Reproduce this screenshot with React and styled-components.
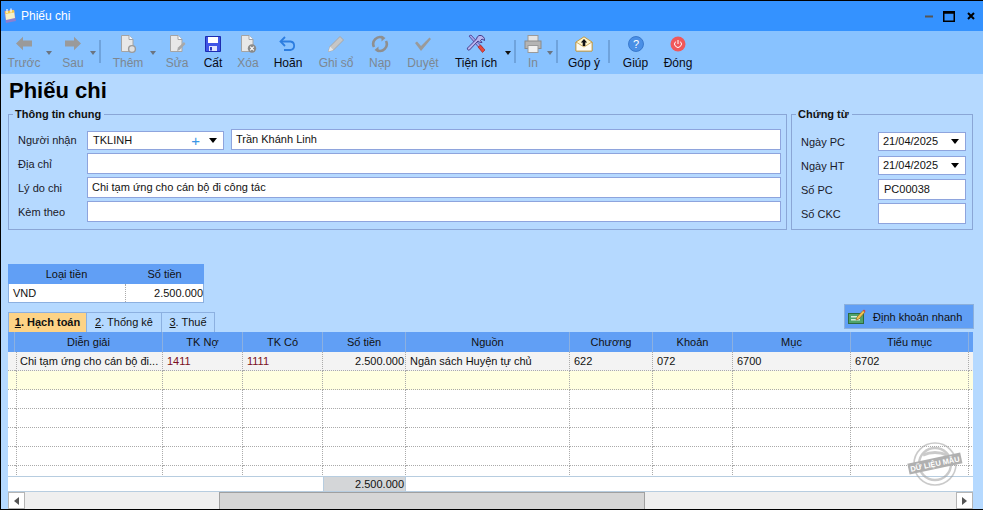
import React from "react";
import styled, { createGlobalStyle } from "styled-components";

const Global = createGlobalStyle`
  html, body { margin: 0; padding: 0; background: #000; }
  body { font-family: "Liberation Sans", Arial, sans-serif; font-size: 11px; color: #111; }
  * { box-sizing: border-box; }
`;

const Win = styled.div`
  width: 983px; height: 510px; border: 1px solid #000; border-right: 0; display: flex; flex-direction: column;
  background: #b5d9ff; overflow: hidden; position: relative;
`;
const TitleBar = styled.div`
  height: 30px; flex: none; background: #3492ff; display: flex; align-items: center; padding: 0 2px 0 1px; color: #fff; font-size: 12px;
`;
const TitleText = styled.span` margin-left: 3px; flex: 1; `;
const WinButtons = styled.div` display: flex; align-items: center; `;
const WinBtn = styled.span` display: flex; width: ${p => p.$w}px; justify-content: center; align-items: center; `;

const Toolbar = styled.div`
  height: 43px; flex: none; background: #88c2ff; display: flex; padding-left: 2px;
`;
const Tool = styled.div`
  width: ${p => p.$w}px; flex: none; margin-left: ${p => p.$ml || 0}px; display: flex; flex-direction: column; align-items: center; padding-top: 2px;
  color: ${p => p.$off ? "#7d8791" : "#0a0a14"}; font-size: 12px; white-space: nowrap;
`;
const IconBox = styled.div` height: 21px; display: flex; align-items: center; justify-content: center; `;
const ToolLabel = styled.div` margin-top: 2px; line-height: 14px; `;
const Caret = styled.div`
  flex: none; width: 0; height: 0; border: 3.5px solid transparent; border-top: 4px solid ${p => p.$off ? "#6b7480" : "#111"}; border-bottom: 0;
  margin: 20px 0 0 ${p => p.$ml ?? 0}px;
`;
const Sep = styled.div`
  flex: none; width: 2px; height: 23px; background: #6fa3dc; margin: 9px 0 0 ${p => p.$ml}px;
`;

const Content = styled.div` flex: 1; padding: 0 9px 0 7px; display: flex; flex-direction: column; min-height: 0; `;
const Heading = styled.h1` margin: 3px 0 0 1px; font-size: 22px; line-height: 27px; height: 27px; font-weight: bold; color: #000; `;
const TopRow = styled.div` display: flex; gap: 4px; margin-top: 3px; `;
const Group = styled.fieldset`
  margin: 0; padding: 7px 6px 0 9px; border: 1px solid #8aa6d6; width: ${p => p.$w}px; height: 123px; min-width: 0; flex: none;
`;
const Legend = styled.legend`
  font-weight: bold; font-size: 11px; line-height: 15px; padding: 0 3px 0 2px; margin-left: -5px; color: #111;
`;
const Fields = styled.div`
  display: grid; grid-template-columns: 69px 137px 7px 550px; grid-auto-rows: 21px; row-gap: 3px; align-items: center;
`;
const Label = styled.label` font-size: 11px; color: #1a1a2a; padding-top: ${p => p.$tight ? 0 : 1}px; `;
const Box = styled.div`
  height: ${p => p.$h || 21}px; background: #fff; border: 1px solid #8ea4dd; display: flex; align-items: center; padding-left: ${p => p.$pl ?? 4}px; padding-bottom: 1px;
  font-size: 11px; color: #111; grid-column: ${p => p.$span || "auto"}; align-self: ${p => p.$end ? "end" : "center"}; white-space: nowrap; position: relative;
`;
const Plus = styled.span` margin-left: auto; color: #3a96e6; font-size: 15px; line-height: 15px; `;
const DropArrow = styled.span`
  width: 0; height: 0; border: 4px solid transparent; border-top: 5px solid #000; border-bottom: 0; margin: 0 6px 0 ${p => p.$ml || 0}px;
`;
const SideFields = styled.div`
  display: grid; grid-template-columns: 77px 88px; grid-auto-rows: 21px; row-gap: 3px; align-items: center; padding-top: 2px;
`;
const Money = styled.div`
  width: 196px; margin: 34px 0 0 0; border: 1px solid #8cb0e0; border-top: 0; flex: none;
`;
const MoneyHead = styled.div` display: grid; grid-template-columns: 117px 1fr; height: 20px; background: #619ff5; align-items: center; text-align: center; margin: 0 -1px; `;
const MoneyRow = styled.div` display: grid; grid-template-columns: 117px 1fr; height: 18px; background: #fff; align-items: center; `;
const MoneyCell = styled.div` padding: 0 ${p => p.$right ? 0 : 4}px; text-align: ${p => p.$right ? "right" : "left"}; height: 100%; line-height: 18px; border-right: ${p => p.$line ? "1px dotted #aaa" : 0}; `;
const TabRow = styled.div` display: flex; justify-content: space-between; align-items: flex-end; height: 28px; margin-top: 1px; flex: none; `;
const Tabs = styled.div` display: flex; `;
const Tab = styled.div`
  height: 20px; width: ${p => p.$w}px; line-height: 19px; text-align: center; border: 1px solid #8cb0e0; border-bottom: 0; border-left-width: ${p => p.$first ? 1 : 0}px;
  background: ${p => p.$on ? "#fdd386" : "#b5d9ff"}; font-weight: ${p => p.$on ? "bold" : "normal"};
  u { text-decoration: underline; }
`;
const QuickBtn = styled.div`
  width: 130px; height: 25px; margin-bottom: 3px; background: #619ff5; border: 1px solid #8cb0dc; display: flex; align-items: center; padding-left: 3px; gap: 7px;
`;
const GridWrap = styled.div`
  flex: none; width: 965px; height: 160px; background: #fff; display: flex; flex-direction: column; overflow: hidden;
`;
const cols = "7px 148px 80px 80px 83px 164px 83px 80px 118px 118px 4px";
const GHead = styled.div`
  display: grid; grid-template-columns: ${cols}; height: 20px; background: #619ff5; flex: none;
`;
const GHeadCell = styled.div` text-align: center; line-height: 20px; border-right: 1px solid #8cb0e0; &:last-child { border-right: 0; } `;
const GRow = styled.div`
  display: grid; grid-template-columns: ${cols}; height: 19px; flex: none; background: ${p => p.$bg || "#fff"};
`;
const GCell = styled.div`
  border-right: 1px dotted #aaa; border-bottom: 1px dotted #aaa; line-height: 19px; overflow: hidden; white-space: nowrap;
  text-align: ${p => p.$right ? "right" : "left"}; color: ${p => p.$red ? "#7a0f22" : "#111"};
  padding: 0 ${p => p.$right ? 1 : 4}px 0 ${p => p.$pl ?? (p.$right ? 1 : 4)}px;
`;
const RowFiller = styled.div` flex: 1; min-height: 0; overflow: hidden; `;
const Foot = styled.div`
  flex: none; border-top: 1px solid #b7cde0; border-bottom: 1px solid #b7cde0; display: grid; grid-template-columns: 315px 83px 1fr; height: 16px;
`;
const FootCell = styled.div` background: #d4d6d8; text-align: right; padding-right: 1px; line-height: 14px; border-right: 1px solid #b7cde0; border-left: 1px solid #b7cde0; `;
const Scroll = styled.div` height: 17px; flex: none; display: flex; background: #efefef; width: 965px; `;
const ScrollBtn = styled.div`
  width: 17px; height: 100%; background: #fff; border: 1px solid #b5b5b5; display: flex; align-items: center; justify-content: center; flex: none;
`;
const Thumb = styled.div` width: 426px; margin-left: 194px; background: #d6d6d6; border-top: 1px solid #a0a0a0; border-left: 1px solid #a0a0a0; border-right: 1px solid #a0a0a0; `;
const Spacer = styled.div` flex: 1; `;
const Stamp = styled.svg` position: absolute; right: 20px; bottom: 22px; pointer-events: none; `;

const Arrow = ({ dir }) => (
  <svg width="18" height="15" viewBox="0 0 18 15"><path d={dir === "l" ? "M1 7.5 L8 .8 V4.5 H17 V10.5 H8 V14.2 Z" : "M17 7.5 L10 .8 V4.5 H1 V10.5 H10 V14.2 Z"} fill="#9a9a9a" /></svg>
);
const Doc = ({ children }) => (
  <svg width="20" height="20" viewBox="0 0 20 20">
    <path d="M3.5 1.5 H11 L15 5.5 V17.5 H3.5 Z" fill="#e8e8e8" stroke="#a4a4a4" />
    <path d="M11 1.5 V5.5 H15" fill="#fff" stroke="#a4a4a4" />
    {children}
  </svg>
);
const Icons = {
  add: <Doc><circle cx="14" cy="15" r="3.4" fill="#e0e0e0" stroke="#9a9a9a" strokeWidth="1.4" /></Doc>,
  edit: <Doc><path d="M10 17 L11 13.5 L17 8 L18.5 10 L12.5 16 Z" fill="#a8a8a8" /></Doc>,
  save: (
    <svg width="16" height="16" viewBox="0 0 16 16">
      <path d="M.5 .5 H15.5 V15.5 H.5 Z" fill="#3f55e6" stroke="#1c2cb0" />
      <rect x="3" y="1" width="10" height="6" fill="#fff" />
      <rect x="4" y="10" width="8" height="5" fill="#dfe4ff" />
      <rect x="5" y="11" width="2" height="3.5" fill="#2a3bc0" />
    </svg>
  ),
  del: <Doc><circle cx="14" cy="14.5" r="4.2" fill="#8a8a8a" /><path d="M12.2 12.7 L15.8 16.3 M15.8 12.7 L12.2 16.3" stroke="#fff" strokeWidth="1.2" /></Doc>,
  undo: (
    <svg width="18" height="16" viewBox="0 0 18 16" fill="none">
      <path d="M2 5.5 H11.5 A4.3 4.3 0 0 1 11.5 14 H5" stroke="#2c7de0" strokeWidth="1.8" />
      <path d="M6 1 L1.5 5.5 L6 10" stroke="#2c7de0" strokeWidth="1.8" />
    </svg>
  ),
  pencil: (
    <svg width="18" height="18" viewBox="0 0 18 18"><path d="M1.5 16.5 L3 11.5 L13 1.5 L16.5 5 L6.5 15 Z" fill="#c6c6c6" stroke="#a8a8a8" /><path d="M1.5 16.5 L3 11.5 L6.5 15 Z" fill="#e6e6e6" /></svg>
  ),
  reload: (
    <svg width="18" height="18" viewBox="0 0 18 18" fill="none" stroke="#8f8f8f" strokeWidth="2.6">
      <path d="M3 12 A6.8 6.8 0 0 1 12 2.8" /><path d="M15 6 A6.8 6.8 0 0 1 6 15.2" />
      <path d="M10.5 0.5 L14.5 3 L10.5 6.5 Z" fill="#8f8f8f" stroke="none" /><path d="M7.5 17.5 L3.5 15 L7.5 11.5 Z" fill="#8f8f8f" stroke="none" />
    </svg>
  ),
  check: (
    <svg width="18" height="16" viewBox="0 0 18 16"><path d="M1 7 L3 5.5 L7 10 L15.5 1.5 L17 3 L7 15 Z" fill="#9a9a9a" /></svg>
  ),
  tools: (
    <svg width="20" height="20" viewBox="0 0 20 20">
      <path d="M3 2 L5 1 L17 14 L15 16 Z" fill="#a6a6e8" stroke="#4a3a90" strokeWidth=".8" />
      <path d="M13 1.5 A4.5 4.5 0 0 1 18.5 6.5 L16 5 L14.5 6.5 L16 8.5 A4.5 4.5 0 0 1 12 7 L3.5 16 A1.5 1.5 0 0 1 1.5 14 L10.5 5 A4.5 4.5 0 0 1 13 1.5 Z" fill="#b9b4ee" stroke="#3b3080" strokeWidth=".9" />
      <path d="M12 13 L14.5 11 L19 16 L16.5 18.5 Z" fill="#e8483c" stroke="#9c1f1f" strokeWidth=".6" />
    </svg>
  ),
  print: (
    <svg width="18" height="18" viewBox="0 0 18 18">
      <rect x="4" y="0.5" width="10" height="6" fill="#e4e4e4" stroke="#9a9a9a" />
      <rect x="1" y="6" width="16" height="7.5" fill="#b4b4b4" stroke="#8a8a8a" />
      <rect x="4" y="10.5" width="10" height="7" fill="#f0f0f0" stroke="#9a9a9a" />
    </svg>
  ),
  mail: (
    <svg width="18" height="16" viewBox="0 0 18 16">
      <path d="M1 6 L9 0.8 L17 6 V15 H1 Z" fill="#fff4c9" stroke="#c29b45" />
      <path d="M1 6 L9 11 L17 6 V15 H1 Z" fill="#fdfbf2" stroke="#c29b45" strokeWidth=".8" />
      <path d="M9 3 L12.2 6.5 H10.3 V10 H7.7 V6.5 H5.8 Z" fill="#111" />
    </svg>
  ),
  help: (
    <svg width="16" height="16" viewBox="0 0 16 16"><circle cx="8" cy="8" r="7.5" fill="#4a8fe6" stroke="#2e6fc4" strokeWidth=".8" /><text x="8" y="12" textAnchor="middle" fill="#fff" fontSize="11" fontFamily="Liberation Sans">?</text></svg>
  ),
  power: (
    <svg width="16" height="16" viewBox="0 0 16 16" fill="none"><circle cx="8" cy="8" r="7.5" fill="#f0585a" /><path d="M5.6 5.6 A3.4 3.4 0 1 0 10.4 5.6" stroke="#fff" strokeWidth="1" /><path d="M8 4 V8" stroke="#fff" strokeWidth="1" /></svg>
  ),
};

const tools = [
  { t: "w", w: 42, ml: 0, label: "Trước", off: 1, icon: <Arrow dir="l" /> }, { t: "c", off: 1, ml: 1 },
  { t: "w", w: 34, ml: 4, label: "Sau", off: 1, icon: <Arrow dir="r" /> }, { t: "c", off: 1 },
  { t: "s", ml: 3 },
  { t: "w", w: 40, ml: 7, label: "Thêm", off: 1, icon: Icons.add }, { t: "c", off: 1, ml: 2 },
  { t: "w", w: 36, ml: 3, label: "Sửa", off: 1, icon: Icons.edit },
  { t: "w", w: 36, label: "Cất", icon: Icons.save },
  { t: "w", w: 34, label: "Xóa", off: 1, icon: Icons.del },
  { t: "w", w: 46, label: "Hoãn", icon: Icons.undo },
  { t: "w", w: 50, label: "Ghi sổ", off: 1, icon: Icons.pencil },
  { t: "w", w: 38, label: "Nạp", off: 1, icon: Icons.reload },
  { t: "w", w: 48, label: "Duyệt", off: 1, icon: Icons.check },
  { t: "w", w: 58, label: "Tiện ích", icon: Icons.tools }, { t: "c" },
  { t: "s", ml: 3 },
  { t: "w", w: 26, ml: 4, label: "In", off: 1, icon: Icons.print }, { t: "c", off: 1, ml: 1 },
  { t: "s", ml: 3 },
  { t: "w", w: 46, ml: 3, label: "Góp ý", icon: Icons.mail },
  { t: "s", ml: 1 },
  { t: "w", w: 47, ml: 2, label: "Giúp", icon: Icons.help },
  { t: "w", w: 38, label: "Đóng", icon: Icons.power },
];

const Head = ["", "Diễn giải", "TK Nợ", "TK Có", "Số tiền", "Nguồn", "Chương", "Khoản", "Mục", "Tiểu mục", ""];
const emptyRow = Array.from({ length: 11 }, (_, i) => i);

function EmptyRow({ bg }) {
  return <GRow $bg={bg}>{emptyRow.map(i => <GCell key={i} />)}</GRow>;
}

export default function App() {
  return (
    <Win>
      <Global />
      <TitleBar>
        <svg width="16" height="16" viewBox="0 0 16 16">
          <path d="M2 3 L12 1.5 L14 13 L4 15 Z" fill="#8a7fd0" />
          <path d="M3 3.5 L12 2 L13 10 L4 12 Z" fill="#f5f0c8" />
          <path d="M3 3.5 L12 2 L12.3 4.5 L3.4 6 Z" fill="#f1c94a" />
          <path d="M5 1 V5 M9 .5 V4.5" stroke="#fff" strokeWidth="1.2" />
        </svg>
        <TitleText>Phiếu chi</TitleText>
        <WinButtons>
          <WinBtn $w={16}><svg width="8" height="3"><rect width="8" height="2" y="0.5" fill="#555" /></svg></WinBtn>
          <WinBtn $w={24}><svg width="12" height="11" viewBox="0 0 12 11"><path d="M.75 .75 H11.25 V10.25 H.75 Z M.75 2 H11.25" fill="none" stroke="#000" strokeWidth="1.5" /></svg></WinBtn>
          <WinBtn $w={20}><svg width="8" height="8" viewBox="0 0 8 8"><path d="M1 1 L7 7 M7 1 L1 7" stroke="#000" strokeWidth="2" /></svg></WinBtn>
        </WinButtons>
      </TitleBar>
      <Toolbar>
        {tools.map((x, i) => x.t === "w" ? (
          <Tool key={i} $w={x.w} $ml={x.ml} $off={x.off}>
            <IconBox>{x.icon}</IconBox>
            <ToolLabel>{x.label}</ToolLabel>
          </Tool>
        ) : x.t === "c" ? <Caret key={i} $off={x.off} $ml={x.ml} /> : <Sep key={i} $ml={x.ml} />)}
      </Toolbar>
      <Content>
        <Heading>Phiếu chi</Heading>
        <TopRow>
          <Group $w={779}>
            <Legend>Thông tin chung</Legend>
            <Fields>
              <Label>Người nhận</Label>
              <Box $h={19} $pl={5} $end>TKLINH<Plus>+</Plus><DropArrow $ml={9} /></Box>
              <span />
              <Box $h={21}>Trần Khánh Linh</Box>
              <Label>Địa chỉ</Label>
              <Box $span="2 / 5" />
              <Label>Lý do chi</Label>
              <Box $span="2 / 5">Chi tạm ứng cho cán bộ đi công tác</Box>
              <Label>Kèm theo</Label>
              <Box $span="2 / 5" />
            </Fields>
          </Group>
          <Group $w={182}>
            <Legend>Chứng từ</Legend>
            <SideFields>
              <Label $tight>Ngày PC</Label>
              <Box $h={19}>21/04/2025<Spacer /><DropArrow /></Box>
              <Label $tight>Ngày HT</Label>
              <Box $h={19}>21/04/2025<Spacer /><DropArrow /></Box>
              <Label $tight>Số PC</Label>
              <Box $pl={5}>PC00038</Box>
              <Label>Số CKC</Label>
              <Box />
            </SideFields>
          </Group>
        </TopRow>
        <Money>
          <MoneyHead><div>Loại tiền</div><div>Số tiền</div></MoneyHead>
          <MoneyRow><MoneyCell $line>VND</MoneyCell><MoneyCell $right>2.500.000</MoneyCell></MoneyRow>
        </Money>
        <TabRow>
          <Tabs>
            <Tab $w={79} $on $first><u>1</u>. Hạch toán</Tab>
            <Tab $w={75}><u>2</u>. Thống kê</Tab>
            <Tab $w={53}><u>3</u>. Thuế</Tab>
          </Tabs>
          <QuickBtn>
            <svg width="18" height="16" viewBox="0 0 18 16">
              <rect x=".5" y="4.5" width="15" height="10" fill="#4fa36a" stroke="#2d6b3e" />
              <rect x="3" y="7" width="6" height="1.5" fill="#d8efd8" /><rect x="3" y="10" width="9" height="1.5" fill="#d8efd8" />
              <path d="M8 11 L9 8 L15 1.5 L17 3 L11 10 Z" fill="#f2c14e" stroke="#8a5a20" strokeWidth=".6" />
              <path d="M15 1.5 L16 .5 L17.5 2 L17 3 Z" fill="#e04040" />
            </svg>
            Định khoản nhanh
          </QuickBtn>
        </TabRow>
        <GridWrap>
          <GHead>{Head.map((h, i) => <GHeadCell key={i}>{h}</GHeadCell>)}</GHead>
          <GRow $bg="#f3f3f3">
            <GCell />
            <GCell $pl={5}>Chi tạm ứng cho cán bộ đi...</GCell>
            <GCell $red>1411</GCell>
            <GCell $red>1111</GCell>
            <GCell $right>2.500.000</GCell>
            <GCell>Ngân sách Huyện tự chủ</GCell>
            <GCell>622</GCell>
            <GCell>072</GCell>
            <GCell>6700</GCell>
            <GCell>6702</GCell>
            <GCell />
          </GRow>
          <EmptyRow bg="#ffffe0" />
          <RowFiller>
            <EmptyRow /><EmptyRow /><EmptyRow /><EmptyRow /><EmptyRow />
          </RowFiller>
          <Foot><div /><FootCell>2.500.000</FootCell><div /></Foot>
        </GridWrap>
        <Scroll>
          <ScrollBtn><svg width="5" height="8"><path d="M5 0 V8 L0 4 Z" fill="#555" /></svg></ScrollBtn>
          <Thumb />
          <Spacer />
          <ScrollBtn><svg width="5" height="8"><path d="M0 0 V8 L5 4 Z" fill="#555" /></svg></ScrollBtn>
        </Scroll>
      </Content>
      <Stamp width="56" height="46" viewBox="0 0 56 46">
        <g opacity=".55" fill="none" stroke="#a0a0a0">
          <circle cx="28" cy="23" r="21" strokeWidth="1.6" />
          <circle cx="28" cy="23" r="16" strokeWidth="2.4" />
          <path d="M16 14 Q28 9 40 14" strokeWidth="3" />
        </g>
        <g transform="rotate(-12 28 23)">
          <rect x="1" y="17" width="54" height="11" fill="#b0b0b0" />
          <text x="28" y="25.5" textAnchor="middle" fill="#fff" fontSize="7.5" fontWeight="bold" fontFamily="Liberation Sans">DỮ LIỆU MẪU</text>
        </g>
      </Stamp>
    </Win>
  );
}
